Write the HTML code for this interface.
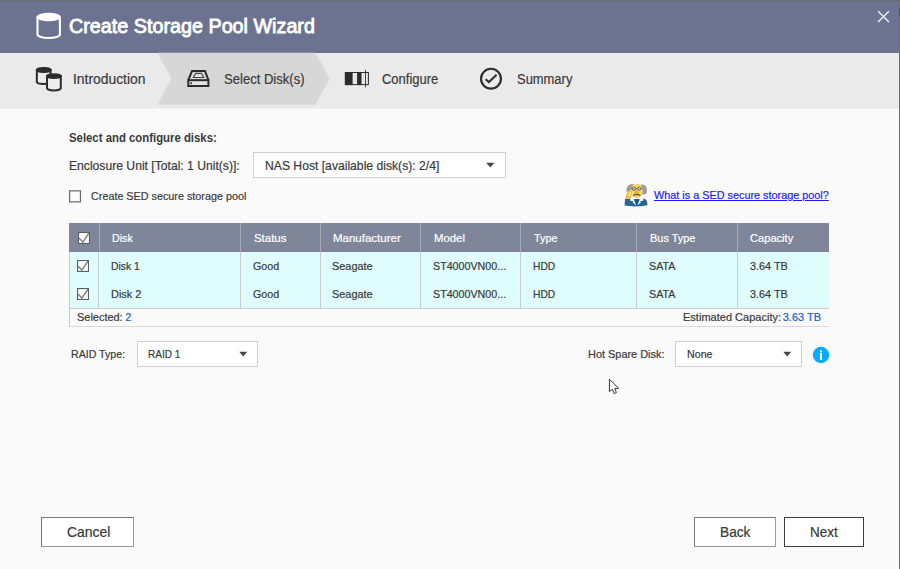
<!DOCTYPE html>
<html lang="en">
<head>
<meta charset="utf-8">
<title>Create Storage Pool Wizard</title>
<style>
html,body{margin:0;padding:0;}
body{width:900px;height:569px;overflow:hidden;background:#6e6e6e;position:relative;
  font-family:"Liberation Sans",Arial,sans-serif;color:#393939;font-size:12px;}
.abs{position:absolute;}
.t{position:absolute;white-space:nowrap;line-height:20px;font-size:11.5px;transform-origin:0 50%;-webkit-text-stroke:0.2px;}
#dlg{left:0;top:1px;width:899px;height:568px;background:#fafafa;}
#hdr{left:0;top:0;width:899px;height:52px;background:#6b7390;}
#steps{left:0;top:52px;width:899px;height:55px;background:#eaeaea;}
#title{font-size:19.5px;font-weight:normal;color:#fff;-webkit-text-stroke:0.8px;}
.st{font-size:14px;color:#3a3a3a;}
.sel{border:1px solid #cfcfcf;background:#fff;box-sizing:border-box;}
.arrow{width:0;height:0;border-left:4.5px solid transparent;border-right:4.5px solid transparent;border-top:5px solid #444;}
.cb{width:12px;height:12px;box-sizing:border-box;border:1px solid #5a5a5a;background:#fff;}
.btn{box-sizing:border-box;margin:0;padding:0;font-family:inherit;border-radius:0;text-align:left;overflow:visible;border:1px solid #777;border-right-color:#999;border-bottom-color:#999;background:#fff;font-size:15px;color:#333;text-align:center;}
.bt{font-size:15px;color:#373737;}
.th{color:#fff;}
.vl{width:1px;background:#ccc;top:252px;height:56px;}
.vh{width:1px;background:#a3a8b6;top:223px;height:29px;}
</style>
</head>
<body>
<div id="dlg" class="abs">
  <div id="hdr" class="abs"></div>
  <div id="steps" class="abs"></div>
  <div class="abs" style="left:0;top:107px;width:899px;height:1px;background:#f1f1f1;"></div>
</div>
<!-- teal sliver at right edge -->
<div class="abs" style="left:899px;top:8px;width:1px;height:8px;background:#0d6b74;"></div>

<!-- header icon + title -->
<svg class="abs" style="left:30px;top:8px;" width="40" height="36" viewBox="30 8 40 36">
  <path d="M37.5 17 V34.5 A11.2 3.5 0 0 0 59.9 34.5 V17" fill="none" stroke="#fff" stroke-width="2.1"/>
  <ellipse cx="48.7" cy="17" rx="12.25" ry="4.25" fill="#fff"/>
</svg>
<div id="title" class="t" style="left:69.1px;top:16px;transform:scaleX(1.013);">Create Storage Pool Wizard</div>
<!-- close X -->
<svg class="abs" style="left:876px;top:9px;" width="15" height="15" viewBox="876 9 15 15">
  <path d="M878.1 11.2 L888.9 22 M888.9 11.2 L878.1 22" stroke="#fff" stroke-opacity=".92" stroke-width="1.35" fill="none"/>
</svg>

<!-- steps -->
<svg class="abs" style="left:150px;top:48px;" width="190" height="64" viewBox="150 48 190 64">
  <polygon points="157.6,52.7 315.5,52.7 329.4,78.7 315.5,104.7 157.6,104.7 171.3,78.7" fill="#d7d7d7"/>
</svg>
<!-- intro icon -->
<svg class="abs" style="left:30px;top:62px;" width="38" height="34" viewBox="30 62 38 34">
  <g stroke="#2b2b2b" stroke-width="2">
    <path d="M36.85 70 V82 A6.9 2.1 0 0 0 50.6 82 V70 Z" fill="#ececec"/>
    <ellipse cx="43.72" cy="70" rx="6.9" ry="1.9" fill="#2b2b2b"/>
    <path d="M47 76.1 V88.3 A6.9 2.1 0 0 0 60.8 88.3 V76.1 Z" fill="#ececec"/>
    <ellipse cx="53.9" cy="76.1" rx="6.9" ry="1.9" fill="#2b2b2b"/>
  </g>
</svg>
<div id="s1" class="t st" style="left:73.1px;top:69px;transform:scaleX(0.990);">Introduction</div>
<!-- disk icon -->
<svg class="abs" style="left:180px;top:62px;" width="38" height="34" viewBox="180 62 38 34">
  <path d="M188.3 80.2 L192 71.1 H205 L208.4 80.2" fill="#dcdcdc" stroke="#2b2b2b" stroke-width="2" stroke-linejoin="miter"/>
  <rect x="188.3" y="80.2" width="20.1" height="5.8" fill="#e4e4e4" stroke="#2b2b2b" stroke-width="2"/>
  <path d="M193.3 77.5 L195.7 73.4 H201.5 L203.8 77.5 Z" fill="#e2e2e2" stroke="#444" stroke-width="1.1"/>
  <circle cx="191.2" cy="83.2" r="1" fill="#2b2b2b"/>
</svg>
<div id="s2" class="t st" style="left:223.5px;top:69px;transform:scaleX(0.933);">Select Disk(s)</div>
<!-- configure icon -->
<svg class="abs" style="left:340px;top:66px;" width="34" height="26" viewBox="340 66 34 26">
  <rect x="345.4" y="72.5" width="23" height="12.1" fill="#e6e6e6" stroke="#2f2f2f" stroke-width="1"/>
  <rect x="344.9" y="72" width="7.7" height="13.1" fill="#2b2b2b"/>
  <rect x="357.1" y="72" width="4.4" height="13.1" fill="#2b2b2b"/>
  <rect x="365.1" y="69.8" width=".9" height="17.4" fill="#333"/>
</svg>
<div id="s3" class="t st" style="left:382.0px;top:69px;transform:scaleX(0.927);">Configure</div>
<!-- summary icon -->
<svg class="abs" style="left:476px;top:64px;" width="30" height="30" viewBox="476 64 30 30">
  <circle cx="491" cy="78.7" r="9.95" fill="none" stroke="#303030" stroke-width="2.2"/>
  <path d="M485.6 79.2 L488.9 82 L496.6 74.7" fill="none" stroke="#303030" stroke-width="2.1"/>
</svg>
<div id="s4" class="t st" style="left:516.6px;top:69px;transform:scaleX(0.924);">Summary</div>

<!-- content -->
<div id="l1" class="t" style="left:68.6px;top:128px;font-size:13px;font-weight:bold;-webkit-text-stroke:0;transform:scaleX(0.874);">Select and configure disks:</div>
<div id="l2" class="t" style="left:69.2px;top:156px;font-size:13px;transform:scaleX(0.934);">Enclosure Unit [Total: 1 Unit(s)]:</div>
<div id="sel1" class="abs sel" style="left:253px;top:152px;width:253px;height:26px;"></div>
<div id="sel1t" class="t" style="left:264.8px;top:156px;font-size:13px;transform:scaleX(0.935);">NAS Host [available disk(s): 2/4]</div>
<svg class="abs" style="left:483px;top:160px;" width="14" height="10" viewBox="483 160 14 10"><polygon points="486.2,162.7 494.4,162.7 490.30,167.4" fill="#474747"/></svg>

<svg class="abs" style="left:66px;top:188px;" width="18" height="18" viewBox="66 188 18 18"><rect x="69.65" y="190.85" width="10.8" height="11" fill="#fcfcfc" stroke="#686868" stroke-width="1.2"/></svg>
<div id="l3" class="t" style="left:90.7px;top:186px;transform:scaleX(0.938);">Create SED secure storage pool</div>
<!-- professor icon -->
<svg class="abs" style="left:620px;top:180px;" width="32" height="30" viewBox="620 180 32 30">
  <path d="M633.5 184.2 C629.5 183 625.6 187 626.6 191.8 L632 192 Z" fill="#9c9c9c"/>
  <path d="M641 184.6 C645.5 183.8 648 188 646.4 194 L641.5 194.8 Z" fill="#9c9c9c"/>
  <path d="M625 198.8 H631 L634 199.5 H640 L643.5 198.6 C646 199 647.3 201 647.3 203.5 V205.3 C640 206.8 631 206.8 624.6 205.6 Z" fill="#2b648f"/>
  <path d="M634.2 199 H639.4 L636.8 205.8 Z" fill="#0c5a9f"/>
  <path d="M630.6 197.6 L633.2 198.2 L636.2 205.2 L632.8 202.6 L633.6 201.6 L630 200.4 Z" fill="#fff"/>
  <path d="M642.9 197.6 L640.3 198.2 L637.4 205.2 L640.8 202.6 L640 201.6 L643.6 200.2 Z" fill="#fff"/>
  <ellipse cx="636.9" cy="190.8" rx="5.9" ry="7.4" fill="#fdd466"/>
  <path d="M626 198.8 C625.5 194 627.5 190.5 631.2 190.2 C632.6 193 632 197 629.5 199 Z" fill="#f9bd3a"/>
  <ellipse cx="629.7" cy="194" rx="1.1" ry="2.3" fill="#fde9b0" transform="rotate(12 629.7 194)"/>
  <circle cx="633.9" cy="188.7" r="1.7" fill="#a9c3e6" stroke="#6a5426" stroke-width=".8"/>
  <circle cx="639.3" cy="188.7" r="1.7" fill="#a9c3e6" stroke="#6a5426" stroke-width=".8"/>
  <path d="M635.6 188.5 H637.6 M631 188.3 L632.3 188.6 M641 188.6 L642.5 188.3" stroke="#6a5426" stroke-width=".7" fill="none"/>
  <path d="M636.6 189.6 L638.7 193.2 H634.4 Z" fill="#f8992b"/>
  <path d="M632.9 195.6 C633.6 193 640 193 640.7 195.6 L640.1 196 C638.6 195 635 195 633.5 196 Z" fill="#625a4b"/>
</svg>
<a id="lnk" class="t" href="#" style="left:654.0px;top:185px;color:#1a1aff;text-decoration:underline;transform:scaleX(0.943);">What is a SED secure storage pool?</a>

<!-- table -->
<div id="tbl" class="abs" style="left:69px;top:223px;width:760px;height:104px;border-left:1px solid #c8c8c8;border-bottom:1px solid #d9d9d9;box-sizing:border-box;background:#fafafa;"></div>
<div id="thd" class="abs" style="left:69px;top:223px;width:760px;height:29px;background:#80869a;"></div>
<div id="tr" class="abs" style="left:70px;top:252px;width:759px;height:56px;background:#dffdfd;border-bottom:1px solid #ccc;"></div>
<div class="abs vh" style="left:99px"></div><div class="abs vl" style="left:98px"></div>
<div class="abs vh" style="left:240px"></div><div class="abs vl" style="left:240px"></div>
<div class="abs vh" style="left:320px"></div><div class="abs vl" style="left:320px"></div>
<div class="abs vh" style="left:420px"></div><div class="abs vl" style="left:420px"></div>
<div class="abs vh" style="left:520px"></div><div class="abs vl" style="left:520px"></div>
<div class="abs vh" style="left:636px"></div><div class="abs vl" style="left:636px"></div>
<div class="abs vh" style="left:737px"></div><div class="abs vl" style="left:737px"></div>

<svg class="abs" style="left:78px;top:232px;" width="12" height="12" viewBox="0 0 12 12"><rect x=".55" y=".55" width="10.9" height="10.9" fill="#fff" stroke="#5e5e5e" stroke-width="1.1"/><path d="M1 6 L4.9 10.2 L11 1" fill="none" stroke="#7d7d7d" stroke-width="1.4"/></svg>
<svg class="abs" style="left:77.4px;top:260px;" width="12" height="12" viewBox="0 0 12 12"><rect x=".55" y=".55" width="10.9" height="10.9" fill="#fff" stroke="#5e5e5e" stroke-width="1.1"/><path d="M1 6 L4.9 10.2 L11 1" fill="none" stroke="#7d7d7d" stroke-width="1.4"/></svg>
<svg class="abs" style="left:77.4px;top:288px;" width="12" height="12" viewBox="0 0 12 12"><rect x=".55" y=".55" width="10.9" height="10.9" fill="#fff" stroke="#5e5e5e" stroke-width="1.1"/><path d="M1 6 L4.9 10.2 L11 1" fill="none" stroke="#7d7d7d" stroke-width="1.4"/></svg>

<div id="h1" class="t th" style="left:112.1px;top:228px;transform:scaleX(0.929);">Disk</div>
<div id="h2" class="t th" style="left:253.5px;top:228px;transform:scaleX(0.994);">Status</div>
<div id="h3" class="t th" style="left:333.0px;top:228px;transform:scaleX(1.000);">Manufacturer</div>
<div id="h4" class="t th" style="left:433.5px;top:228px;transform:scaleX(0.987);">Model</div>
<div id="h5" class="t th" style="left:533.5px;top:228px;transform:scaleX(0.939);">Type</div>
<div id="h6" class="t th" style="left:649.7px;top:228px;transform:scaleX(0.951);">Bus Type</div>
<div id="h7" class="t th" style="left:749.7px;top:228px;transform:scaleX(0.966);">Capacity</div>

<div id="a1" class="t" style="left:110.8px;top:256px;transform:scaleX(0.901);">Disk 1</div>
<div id="a2" class="t" style="left:252.6px;top:256px;transform:scaleX(0.931);">Good</div>
<div id="a3" class="t" style="left:332.4px;top:256px;transform:scaleX(0.948);">Seagate</div>
<div id="a4" class="t" style="left:432.6px;top:256px;transform:scaleX(0.930);">ST4000VN00...</div>
<div id="a5" class="t" style="left:533.0px;top:256px;transform:scaleX(0.893);">HDD</div>
<div id="a6" class="t" style="left:649.3px;top:256px;transform:scaleX(0.930);">SATA</div>
<div id="a7" class="t" style="left:749.7px;top:256px;transform:scaleX(0.942);">3.64 TB</div>

<div id="c1" class="t" style="left:110.8px;top:284px;transform:scaleX(0.952);">Disk 2</div>
<div id="c2" class="t" style="left:252.6px;top:284px;transform:scaleX(0.931);">Good</div>
<div id="c3" class="t" style="left:332.4px;top:284px;transform:scaleX(0.948);">Seagate</div>
<div id="c4" class="t" style="left:432.6px;top:284px;transform:scaleX(0.930);">ST4000VN00...</div>
<div id="c5" class="t" style="left:533.0px;top:284px;transform:scaleX(0.893);">HDD</div>
<div id="c6" class="t" style="left:649.3px;top:284px;transform:scaleX(0.930);">SATA</div>
<div id="c7" class="t" style="left:749.7px;top:284px;transform:scaleX(0.942);">3.64 TB</div>

<div id="sel" class="t" style="left:77.3px;top:307px;transform:scaleX(0.952);">Selected: <span style="color:#1a5fd0;margin-left:-0.5px">2</span></div>
<div id="est" class="t" style="left:682.6px;top:307px;transform:scaleX(0.959);">Estimated Capacity: <span style="color:#1a5fd0;margin-left:-1.5px">3.63 TB</span></div>

<!-- raid -->
<div id="l4" class="t" style="left:70.9px;top:344px;transform:scaleX(0.923);">RAID Type:</div>
<div id="sel2" class="abs sel" style="left:137px;top:341px;width:121px;height:26px;"></div>
<div id="sel2t" class="t" style="left:147.7px;top:344px;transform:scaleX(0.871);">RAID 1</div>
<svg class="abs" style="left:236px;top:349px;" width="14" height="10" viewBox="236 349 14 10"><polygon points="239.2,351.7 247.3,351.7 243.25,356.4" fill="#474747"/></svg>

<div id="l5" class="t" style="left:587.5px;top:344px;transform:scaleX(0.950);">Hot Spare Disk:</div>
<div id="sel3" class="abs sel" style="left:675px;top:341px;width:127px;height:26px;"></div>
<div id="sel3t" class="t" style="left:686.6px;top:344px;transform:scaleX(0.927);">None</div>
<svg class="abs" style="left:780px;top:349px;" width="14" height="10" viewBox="780 349 14 10"><polygon points="783.2,351.7 791.3,351.7 787.25,356.4" fill="#474747"/></svg>
<svg class="abs" style="left:811px;top:345px;" width="20" height="20" viewBox="811 345 20 20">
  <circle cx="821" cy="355" r="8.2" fill="#07adfc"/>
  <rect x="820" y="350.4" width="2" height="1.8" fill="#fff"/>
  <rect x="820" y="353" width="2" height="7" fill="#fff"/>
</svg>

<!-- cursor -->
<svg class="abs" style="left:605px;top:375px;" width="20" height="24" viewBox="605 375 20 24">
  <path d="M609.4 379.2 V391.7 L612.4 389.2 L614.2 393.5 L616.4 392.6 L614.7 388.5 L618.6 388.3 Z" fill="#fff" stroke="#34343e" stroke-width="1" stroke-linejoin="round"/>
</svg>

<!-- buttons -->
<button type="button" id="bb1" class="abs btn" style="left:41px;top:517px;width:93px;height:30px;"><span id="b1" class="t bt" style="left:24.9px;top:4px;transform:scaleX(0.930);">Cancel</span></button>
<button type="button" id="bb2" class="abs btn" style="left:694px;top:517px;width:82px;height:30px;"><span id="b2" class="t bt" style="left:25.0px;top:4px;transform:scaleX(0.913);">Back</span></button>
<button type="button" id="bb3" class="abs btn" style="left:784px;top:517px;width:80px;height:30px;border-color:#3c3c3c;"><span id="b3" class="t bt" style="left:24.8px;top:4px;transform:scaleX(0.898);">Next</span></button>
</body>
</html>
